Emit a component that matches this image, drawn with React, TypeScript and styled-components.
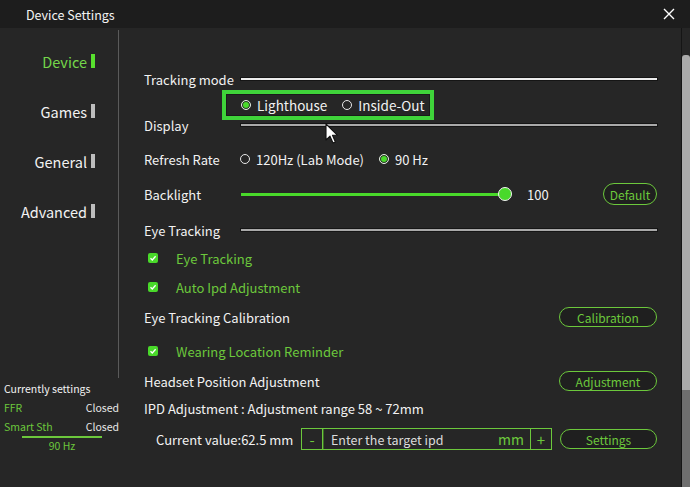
import styled, { createGlobalStyle } from "styled-components";

const GREEN = "#6cc83c";
const BRIGHT = "#49d92a";

const GlobalStyle = createGlobalStyle`
  html, body {
    margin: 0;
    padding: 0;
    background: #262626;
  }
  body {
    font-family: "Noto Sans CJK SC", "Noto Sans", sans-serif;
    color: #f2f2f2;
  }
`;

const navItems = ["Device", "Games", "General", "Advanced"];

const Radio = ({ checked }: { checked?: boolean }) => <RadioDot $checked={checked} />;

const CheckBox = () => (
  <Check>
    <svg width="8" height="8" viewBox="0 0 8 8">
      <path d="M1.5 4.2 L3.3 6 L6.6 2.2" fill="none" stroke="#fff" strokeWidth="1.3" />
    </svg>
  </Check>
);

const Cursor = () => (
  <CursorMark>
    <svg width="14" height="22" viewBox="0 0 14 22">
      <path
        d="M1 1 L1 17 L5 13.2 L8 20 L10.4 19 L7.5 12.3 L12.6 12.3 Z"
        fill="#fff"
        stroke="#111"
        strokeWidth="1.1"
        strokeLinejoin="round"
      />
    </svg>
  </CursorMark>
);

export default function App() {
  return (
    <>
      <GlobalStyle />
      <Window>
        <Header>
          <Title>Device Settings</Title>
          <Close>
            <svg width="12" height="12" viewBox="0 0 12 12">
              <path d="M1 1 L11 11 M11 1 L1 11" stroke="#fff" strokeWidth="1.4" />
            </svg>
          </Close>
        </Header>
        <Body>
          <Sidebar>
            <NavPane>
              {navItems.map((item, i) => (
                <NavItem key={item} $active={i === 0}>
                  {item}
                  <NavBar $active={i === 0} />
                </NavItem>
              ))}
            </NavPane>
            <CurrentPanel>
              <CurrentTitle>Currently settings</CurrentTitle>
              <StatusRow>
                <StatusName>FFR</StatusName>
                <span>Closed</span>
              </StatusRow>
              <StatusRow>
                <StatusName>Smart Sth</StatusName>
                <span>Closed</span>
              </StatusRow>
              <HzLine />
              <HzText>90 Hz</HzText>
            </CurrentPanel>
          </Sidebar>

          <Main>
            <Row $mt={0}>
              <Label>Tracking mode</Label>
              <SectionLine $bright />
            </Row>
            <Row $mt={6}>
              <Highlight>
                <Option $big>
                  <Radio checked />
                  Lighthouse
                </Option>
                <Option $big>
                  <Radio />
                  Inside-Out
                </Option>
              </Highlight>
            </Row>
            <Row $mt={0}>
              <Label>Display</Label>
              <SectionLine />
            </Row>
            <Row $mt={14}>
              <Label>Refresh Rate</Label>
              <Options>
                <Option>
                  <Radio />
                  120Hz (Lab Mode)
                </Option>
                <Option>
                  <Radio checked />
                  90 Hz
                </Option>
              </Options>
            </Row>
            <Row $mt={13} $h={24}>
              <Label>Backlight</Label>
              <Slider>
                <SliderFill style={{ width: "100%" }} />
                <SliderThumb />
              </Slider>
              <SliderValue>100</SliderValue>
              <PillButton $w={54} $h={22}>Default</PillButton>
            </Row>
            <Row $mt={14}>
              <Label>Eye Tracking</Label>
              <SectionLine />
            </Row>
            <Row $mt={8}>
              <CheckLine>
                <CheckBox />
                Eye Tracking
              </CheckLine>
            </Row>
            <Row $mt={9}>
              <CheckLine>
                <CheckBox />
                Auto Ipd Adjustment
              </CheckLine>
            </Row>
            <Row $mt={9} $h={22}>
              <Text>Eye Tracking Calibration</Text>
              <Spacer />
              <PillButton $w={98}>Calibration</PillButton>
            </Row>
            <Row $mt={13}>
              <CheckLine>
                <CheckBox />
                Wearing Location Reminder
              </CheckLine>
            </Row>
            <Row $mt={9} $h={22}>
              <Text>Headset Position Adjustment</Text>
              <Spacer />
              <PillButton $w={98}>Adjustment</PillButton>
            </Row>
            <Row $mt={6}>
              <Text>IPD Adjustment : Adjustment range 58 ~ 72mm</Text>
            </Row>
            <Row $mt={9} $h={24}>
              <CurrentValue>Current value:62.5 mm</CurrentValue>
              <Stepper>
                <StepButton>-</StepButton>
                <IpdInput>
                  <Placeholder>Enter the target ipd</Placeholder>
                  <Unit>mm</Unit>
                </IpdInput>
                <StepButton>+</StepButton>
              </Stepper>
              <Spacer />
              <PillButton $w={97}>Settings</PillButton>
            </Row>
          </Main>

          <Scrollbar>
            <Thumb />
            <Track />
          </Scrollbar>
        </Body>
        <Cursor />
      </Window>
    </>
  );
}

const Window = styled.div`
  position: relative;
  width: 690px;
  height: 487px;
  overflow: hidden;
  display: flex;
  flex-direction: column;
  background: #262626;
`;

// header
const Header = styled.div`
  height: 28px;
  flex-shrink: 0;
  display: flex;
  align-items: center;
  background: #1d1d1d;
  padding: 0 15px 0 26px;
`;

const Title = styled.div`
  font-size: 12.5px;
  color: #f4f4f4;
`;

const Close = styled.div`
  margin-left: auto;
  display: flex;
  align-items: center;
`;

const Body = styled.div`
  flex: 1;
  display: flex;
  min-height: 0;
`;

// sidebar
const Sidebar = styled.div`
  width: 119px;
  flex-shrink: 0;
  display: flex;
  flex-direction: column;
`;

const NavPane = styled.div`
  height: 348px;
  margin-top: 2px;
  border-right: 1px solid #5a5a5a;
  display: flex;
  flex-direction: column;
  align-items: flex-end;
  padding: 21px 23px 0 0;
  box-sizing: border-box;
  gap: 30px;
`;

const NavItem = styled.div<{ $active?: boolean }>`
  height: 20px;
  display: flex;
  align-items: center;
  gap: 4px;
  font-size: 14.5px;
  color: ${(p) => (p.$active ? "#74d64a" : "#f2f2f2")};
`;

const NavBar = styled.span<{ $active?: boolean }>`
  width: 4px;
  height: 14px;
  background: ${(p) => (p.$active ? "#58e02e" : "#bdbdbd")};
`;

const CurrentPanel = styled.div`
  display: flex;
  flex-direction: column;
  padding: 3px 0 0 4px;
  font-size: 10.5px;
`;

const CurrentTitle = styled.div`
  height: 16px;
  line-height: 16px;
  color: #f2f2f2;
`;

const StatusRow = styled.div`
  height: 16px;
  line-height: 16px;
  margin-top: 3px;
  display: flex;
  justify-content: space-between;
  color: #e6e6e6;
`;

const StatusName = styled.span`
  color: ${GREEN};
`;

const HzLine = styled.div`
  width: 80px;
  height: 2px;
  margin: 1px 0 0 18px;
  background: ${GREEN};
`;

const HzText = styled.div`
  width: 80px;
  margin-left: 18px;
  text-align: center;
  color: ${GREEN};
  line-height: 16px;
`;

// main
const Main = styled.div`
  flex: 1;
  display: flex;
  flex-direction: column;
  padding: 41px 24px 0 25px;
  min-width: 0;
`;

const Row = styled.div<{ $mt: number; $h?: number }>`
  height: ${(p) => p.$h ?? 20}px;
  margin-top: ${(p) => p.$mt}px;
  flex-shrink: 0;
  display: flex;
  align-items: center;
  font-size: 13px;
  color: #f2f2f2;
`;

const Label = styled.div`
  width: 97px;
  flex-shrink: 0;
  white-space: nowrap;
`;

const Text = styled.div`
  white-space: nowrap;
`;

const Spacer = styled.div`
  flex: 1;
`;

const SectionLine = styled.div<{ $bright?: boolean }>`
  flex: 1;
  height: 2px;
  background: ${(p) => (p.$bright ? "#ececec" : "#a9a9a9")};
  box-shadow: 0 0 0 1px #151515;
`;

const Highlight = styled.div`
  height: 30px;
  box-sizing: border-box;
  margin-left: 78px;
  display: flex;
  align-items: center;
  gap: 15px;
  padding: 0 5px 0 15px;
  border: 4px solid #3fd33a;
  box-shadow: inset 0 0 0 1px #1a1a1a;
`;

const Options = styled.div`
  display: flex;
  align-items: center;
  gap: 15px;
  margin-left: -1px;
`;

const Option = styled.div<{ $big?: boolean }>`
  display: flex;
  align-items: center;
  gap: 6px;
  font-size: ${(p) => (p.$big ? 13.5 : 13)}px;
  white-space: nowrap;
`;

const RadioDot = styled.span<{ $checked?: boolean }>`
  width: 10px;
  height: 10px;
  box-sizing: border-box;
  border-radius: 50%;
  border: 1.3px solid #e8e8e8;
  background: ${(p) => (p.$checked ? BRIGHT : "transparent")};
  box-shadow: ${(p) => (p.$checked ? "inset 0 0 0 1px #262626" : "none")};
`;

const Slider = styled.div`
  position: relative;
  width: 264px;
  height: 3px;
  background: #555;
`;

const SliderFill = styled.div`
  height: 100%;
  background: ${BRIGHT};
`;

const SliderThumb = styled.span`
  position: absolute;
  right: -7px;
  top: -6px;
  width: 14px;
  height: 14px;
  box-sizing: border-box;
  border-radius: 50%;
  background: ${BRIGHT};
  border: 1.5px solid #f4f4f4;
`;

const SliderValue = styled.div`
  margin-left: 22px;
`;

const PillButton = styled.div<{ $w: number; $h?: number }>`
  width: ${(p) => p.$w}px;
  height: ${(p) => p.$h ?? 20}px;
  box-sizing: border-box;
  margin-left: auto;
  border: 1.5px solid ${GREEN};
  border-radius: 11px;
  display: flex;
  align-items: center;
  justify-content: center;
  font-size: 12px;
  color: ${GREEN};
  background: #1f1f1f;
`;

const CheckLine = styled.div`
  display: flex;
  align-items: center;
  gap: 18px;
  margin-left: 4px;
  color: ${GREEN};
  font-size: 13px;
`;

const Check = styled.span`
  width: 10px;
  height: 10px;
  border-radius: 2px;
  background: ${BRIGHT};
  display: flex;
  align-items: center;
  justify-content: center;
`;

const CurrentValue = styled.div`
  margin-left: 12px;
  width: 145px;
  white-space: nowrap;
`;

const Stepper = styled.div`
  display: flex;
  height: 22px;
`;

const StepButton = styled.div`
  width: 22px;
  box-sizing: border-box;
  border: 1px solid ${GREEN};
  display: flex;
  align-items: center;
  justify-content: center;
  color: ${GREEN};
  font-size: 15px;
`;

const IpdInput = styled.div`
  width: 207px;
  box-sizing: border-box;
  border: 1px solid ${GREEN};
  border-left: none;
  border-right: none;
  box-shadow: inset 1px 0 0 #3b6b25;
  display: flex;
  align-items: center;
  padding: 0 6px 0 8px;
`;

const Placeholder = styled.span`
  color: #dcdcdc;
  font-size: 12.5px;
`;

const Unit = styled.span`
  margin-left: auto;
  color: ${GREEN};
  font-size: 14px;
`;

// scrollbar
const Scrollbar = styled.div`
  width: 8px;
  flex-shrink: 0;
  display: flex;
  flex-direction: column;
  padding-top: 27px;
  border-left: 1px solid #151515;
`;

const Thumb = styled.div`
  height: 335px;
  background: #aaaaaa;
  border-radius: 3px 3px 0 0;
`;

const Track = styled.div`
  flex: 1;
  background: #6e6e6e;
`;

const CursorMark = styled.div`
  position: absolute;
  left: 325px;
  top: 123px;
  line-height: 0;
`;
